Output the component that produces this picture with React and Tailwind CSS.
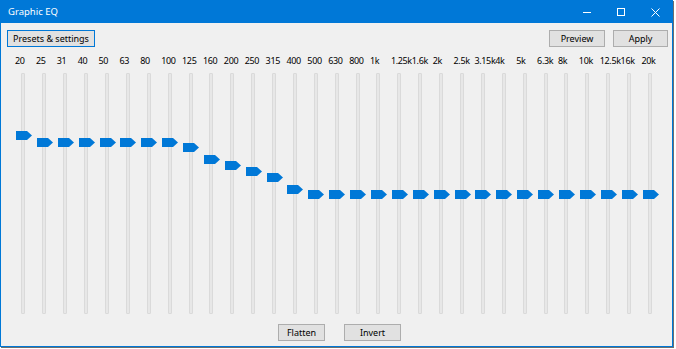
import React from "react";

const bands = [
  ["20", 58], ["25", 64.5], ["31", 64.5], ["40", 64.5], ["50", 64.5], ["63", 64.5], ["80", 64.5], ["100", 64.5],
  ["125", 70], ["160", 81.5], ["200", 88], ["250", 93.5], ["315", 99.5], ["400", 111.5],
  ["500", 116.5], ["630", 116.5], ["800", 116.5], ["1k", 116.5], ["1.25k", 116.5], ["1.6k", 116.5], ["2k", 116.5],
  ["2.5k", 116.5], ["3.15k", 116.5], ["4k", 116.5], ["5k", 116.5], ["6.3k", 116.5], ["8k", 116.5],
  ["10k", 116.5], ["12.5k", 116.5], ["16k", 116.5], ["20k", 116.5],
];

function Btn({ children, className = "" }) {
  return (
    <div className={"h-[17px] flex items-center justify-center border text-[9px] text-black leading-none " + className}>
      {children}
    </div>
  );
}

export default function App() {
  return (
    <div className="w-[676px] h-[349px] bg-white overflow-hidden" style={{ fontFamily: '"Noto Sans", sans-serif' }}>
      <div className="w-[673px] h-[347px] border border-[#0078d7] bg-[#f0f0f0] flex flex-col shadow-[1px_1px_0_0_#6e6e6e]">
        {/* title bar */}
        <div className="h-[22px] bg-[#0078d7] flex items-center shrink-0">
          <span className="pl-[7px] text-white text-[9.5px] leading-none">Graphic EQ</span>
          <div className="ml-auto flex h-full">
            <div className="w-[34px] h-full flex items-center justify-center">
              <div className="w-[8px] h-[1px] bg-white" />
            </div>
            <div className="w-[34px] h-full flex items-center justify-center">
              <div className="w-[8px] h-[8px] border border-white" />
            </div>
            <div className="w-[34px] h-full flex items-center justify-center">
              <svg width="9" height="9" viewBox="0 0 9 9">
                <path d="M0.5 0.5 L8.5 8.5 M8.5 0.5 L0.5 8.5" stroke="white" strokeWidth="1" />
              </svg>
            </div>
          </div>
        </div>
        {/* top buttons */}
        <div className="flex mt-[7px] pl-[6px] pr-[4px] shrink-0">
          <Btn className="w-[88px] border-[#0078d7] bg-[#e1e1e1]">Presets &amp; settings</Btn>
          <div className="ml-auto flex gap-[8px]">
            <Btn className="w-[56px] border-[#adadad] bg-[#e1e1e1]">Preview</Btn>
            <Btn className="w-[55px] border-[#adadad] bg-[#e1e1e1]">Apply</Btn>
          </div>
        </div>
        {/* sliders */}
        <div className="ml-[12px] w-[647.4px] grid grid-cols-31 mt-[8px] shrink-0">
          {bands.map(([label, top]) => (
            <div key={label} className="flex flex-col">
              <div className="h-[12px] pl-[2px] text-[9px] leading-[12px] tracking-[-0.35px] text-black whitespace-nowrap">{label}</div>
              <div className="relative h-[241px] mt-[6px] flex justify-center">
                <div className="w-[4px] h-full bg-[#e7e7e7] border border-[#dadada] rounded-[1px]" />
                <svg
                  className="absolute left-[3px]"
                  style={{ top: top }}
                  width="16"
                  height="9"
                  viewBox="0 0 16 9"
                >
                  <polygon points="0,0 11,0 16,4.5 11,9 0,9" fill="#0078d7" />
                </svg>
              </div>
            </div>
          ))}
        </div>
        {/* bottom buttons */}
        <div className="flex mt-[10px] ml-[277px] gap-[19px] shrink-0">
          <Btn className="w-[47px] border-[#adadad] bg-[#e1e1e1]">Flatten</Btn>
          <Btn className="w-[57px] border-[#adadad] bg-[#e1e1e1]">Invert</Btn>
        </div>
      </div>
    </div>
  );
}
